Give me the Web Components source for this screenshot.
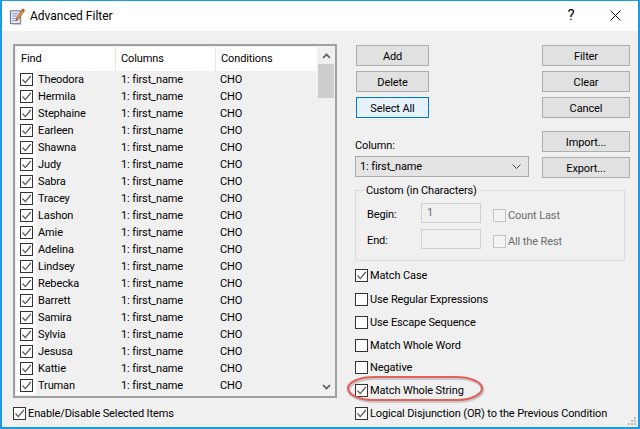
<!DOCTYPE html>
<html>
<head>
<meta charset="utf-8">
<title>Advanced Filter</title>
<style>
  html, body { margin: 0; padding: 0; background: #f0f0f0; }
  body { font: 11px Roboto, Lato, sans-serif; letter-spacing: -.12px; color: #000; }
</style>
</head>
<body>
<af-dialog>
  <af-list slot="left"></af-list>
  <af-check slot="left" checked class="enable">Enable/Disable Selected Items</af-check>

  <af-panel slot="right">
    <af-button slot="a" style="width:73px">Add</af-button>
    <af-button slot="a" style="width:73px">Delete</af-button>
    <af-button slot="a" style="width:73px" focus>Select All</af-button>
    <af-button slot="b">Filter</af-button>
    <af-button slot="b">Clear</af-button>
    <af-button slot="b">Cancel</af-button>
    <af-button slot="c">Import...</af-button>
    <af-button slot="c">Export...</af-button>
    <af-combo slot="combo" label="Column:" value="1: first_name"></af-combo>
  </af-panel>

  <af-group slot="right"></af-group>

  <af-options slot="right">
    <af-check checked>Match Case</af-check>
    <af-check style="margin-top:1px">Use Regular Expressions</af-check>
    <af-check>Use Escape Sequence</af-check>
    <af-check>Match Whole Word</af-check>
    <af-check style="margin-top:-1px">Negative</af-check>
    <af-check checked>Match Whole String</af-check>
    <af-check checked>Logical Disjunction (OR) to the Previous Condition</af-check>
  </af-options>
</af-dialog>

<script>
const CHECK_MARK = `<svg viewBox="0 0 13 13" width="13" height="13"><path d="M2.5 6.5 L5.3 9.6 L10.8 3" fill="none" stroke="#5a5a5a" stroke-width="1.3"/></svg>`;

class AfDialog extends HTMLElement {
  constructor() {
    super();
    this.attachShadow({ mode: "open" });
    this.shadowRoot.innerHTML = `
      <style>
        :host {
          display: flex;
          flex-direction: column;
          position: relative;
          box-sizing: border-box;
          width: 640px;
          height: 429px;
          overflow: hidden;
          background: #f0f0f0;
          border: solid #1a9be6;
          border-width: 1px 2px 2px 2px;
        }
        .title {
          height: 30px;
          flex: none;
          background: #fff;
          display: flex;
          align-items: center;
        }
        .title svg.app { margin: 0 4px 0 7px; flex: none; }
        .title span { flex: 1; font-size: 12px; letter-spacing: 0; }
        .help { width: 46px; text-align: center; font-size: 15px; position: relative; top: -1px; margin-right: -1px; }
        .close { width: 45px; display: flex; justify-content: center; position: relative; top: -1px; }
        .main {
          flex: 1;
          display: flex;
          gap: 18px;
          padding: 13px 0 0 11px;
        }
        .left { width: 324px; display: flex; flex-direction: column; gap: 7px; }
        .right { width: 275px; display: flex; flex-direction: column; }
        .ring { position: absolute; left: 343px; top: 371px; }
        .grip { position: absolute; right: 1px; bottom: 1px; }
      </style>
      <div class="title">
        <svg class="app" width="17" height="17" viewBox="0 0 18 18">
          <path d="M1.5 3 H12 V16.5 H1.5 Z" fill="#eef0fa" stroke="#5a5f8c"/>
          <path d="M12.5 5 V17 H3" fill="none" stroke="#9a9ab4"/>
          <path d="M3 6 H10 M3 8.5 H9 M3 11 H8 M3 13.5 H9" stroke="#7f8fc4" stroke-width="1"/>
          <path d="M14.5 1 L16.5 2.5 L10 12 L7.5 13.5 L8 10.5 Z" fill="#e8a23a" stroke="#8a4a22" stroke-width=".8"/>
          <path d="M14.5 1 L16.5 2.5 L15.4 4 L13.4 2.6 Z" fill="#c2402e"/>
        </svg>
        <span>Advanced Filter</span>
        <div class="help">?</div>
        <div class="close">
          <svg width="11" height="11" viewBox="0 0 11 11"><path d="M.5 .5 L10.5 10.5 M10.5 .5 L.5 10.5" stroke="#111" stroke-width="1"/></svg>
        </div>
      </div>
      <div class="main">
        <div class="left"><slot name="left"></slot></div>
        <div class="right"><slot name="right"></slot></div>
      </div>
      <svg class="ring" width="146" height="34" viewBox="0 0 146 34">
        <rect x="3" y="5" width="134" height="23" rx="26" ry="11.5" fill="none" stroke="#000" stroke-opacity=".16" stroke-width="3" transform="translate(1 1.5)"/>
        <rect x="3" y="5" width="134" height="23" rx="26" ry="11.5" fill="none" stroke="#e2625a" stroke-width="2.2"/>
      </svg>
      <svg class="grip" width="10" height="10" viewBox="0 0 10 10" fill="#bdbdbd">
        <rect x="7" y="1" width="2" height="2"/><rect x="4" y="4" width="2" height="2"/><rect x="7" y="4" width="2" height="2"/>
        <rect x="1" y="7" width="2" height="2"/><rect x="4" y="7" width="2" height="2"/><rect x="7" y="7" width="2" height="2"/>
      </svg>
    `;
  }
}

class AfList extends HTMLElement {
  constructor() {
    super();
    this.attachShadow({ mode: "open" });
    const names = ["Theodora","Hermila","Stephaine","Earleen","Shawna","Judy","Sabra","Tracey","Lashon","Amie","Adelina","Lindsey","Rebecka","Barrett","Samira","Sylvia","Jesusa","Kattie","Truman",""];
    const rows = names.map(n => `
      <div class="row">
        <div class="cb"><div class="box">${CHECK_MARK}</div></div>
        <div class="name">${n}</div>
        <div class="col">${n ? "1: first_name" : ""}</div>
        <div class="cond">${n ? "CHO" : ""}</div>
      </div>`).join("");
    this.shadowRoot.innerHTML = `
      <style>
        :host {
          display: flex;
          box-sizing: border-box;
          width: 324px;
          height: 354px;
          border: 1px solid #a0a0a0;
          outline: 1px solid #a0a0a0;
          outline-offset: -2px;
          padding: 2px;
          overflow: hidden;
          background: #f0f0f0;
        }
        .content { flex: 1; overflow: hidden; min-width: 0; }
        .head {
          display: grid;
          grid-template-columns: 100px 100px 1fr;
          height: 24px;
          background: #fff;
          line-height: 23px;
        }
        .head div { padding-left: 5px; border-right: 1px solid #e6e6e6; box-sizing: border-box; }
        .head div:last-child { border-right: 0; }
        .row {
          display: grid;
          grid-template-columns: 20px 85px 99px 1fr;
          height: 17px;
          line-height: 17px;
          white-space: nowrap;
        }
        .cb { background: #fff; padding-left: 4px; display: flex; align-items: center; }
        .box { width: 13px; height: 13px; box-sizing: border-box; border: 1px solid #333; background: #fff; display: flex; align-items: center; justify-content: center; flex: none; }
        .box svg { flex: none; }
        .name { padding-left: 2px; }
        .bar {
          width: 16px;
          flex: none;
          display: flex;
          flex-direction: column;
          align-items: stretch;
          margin-left: 1px;
          background: #f0f0f0;
        }
        .arrow { height: 17px; display: flex; align-items: center; justify-content: center; flex: none; }
        .thumb { height: 34px; background: #cdcdcd; flex: none; }
        .track { flex: 1; }
      </style>
      <div class="content">
        <div class="head"><div>Find</div><div>Columns</div><div>Conditions</div></div>
        ${rows}
      </div>
      <div class="bar">
        <div class="arrow"><svg width="9" height="6" viewBox="0 0 9 6"><path d="M1 5 L4.5 1.5 L8 5" fill="none" stroke="#555" stroke-width="1.6"/></svg></div>
        <div class="thumb"></div>
        <div class="track"></div>
        <div class="arrow"><svg width="9" height="6" viewBox="0 0 9 6"><path d="M1 1 L4.5 4.5 L8 1" fill="none" stroke="#555" stroke-width="1.6"/></svg></div>
      </div>
    `;
  }
}

class AfButton extends HTMLElement {
  constructor() {
    super();
    this.attachShadow({ mode: "open" });
    this.shadowRoot.innerHTML = `
      <style>
        :host {
          display: flex;
          align-items: center;
          justify-content: center;
          box-sizing: border-box;
          height: 21px;
          padding-top: 1px;
          background: #e1e1e1;
          border: 1px solid #adadad;
          white-space: nowrap;
        }
        :host([focus]) { background: #e5f1fb; border-color: #0078d7; }
      </style>
      <span><slot></slot></span>
    `;
  }
}

class AfCheck extends HTMLElement {
  constructor() {
    super();
    this.attachShadow({ mode: "open" });
    this.shadowRoot.innerHTML = `
      <style>
        :host { display: flex; align-items: center; gap: 2px; white-space: nowrap; height: 17px; }
        .box { width: 13px; height: 13px; box-sizing: border-box; border: 1px solid #333; background: #fff; display: flex; align-items: center; justify-content: center; flex: none; }
        :host([disabled]) .box { border-color: #c4c4c4; background: #f3f3f3; }
        :host([disabled]) { color: #6d6d6d; }
        svg { flex: none; }
      </style>
      <div class="box">${this.hasAttribute("checked") ? CHECK_MARK : ""}</div>
      <span><slot></slot></span>
    `;
  }
}

class AfCombo extends HTMLElement {
  constructor() {
    super();
    this.attachShadow({ mode: "open" });
    this.shadowRoot.innerHTML = `
      <style>
        :host { display: flex; flex-direction: column; gap: 2px; }
        .label { height: 17px; line-height: 17px; }
        .field {
          box-sizing: border-box; height: 21px; width: 174px;
          background: #e4e4e4; border: 1px solid #a9a9a9;
          display: flex; align-items: center; justify-content: space-between;
          padding: 0 4px; line-height: 17px;
        }
      </style>
      <div class="label">${this.getAttribute("label")}</div>
      <div class="field">
        <span>${this.getAttribute("value")}</span>
        <svg width="9" height="5" viewBox="0 0 9 5" style="margin-right:3px"><path d="M.5 .5 L4.5 4.5 L8.5 .5" fill="none" stroke="#444" stroke-width="1"/></svg>
      </div>
    `;
  }
}

class AfPanel extends HTMLElement {
  constructor() {
    super();
    this.attachShadow({ mode: "open" });
    this.shadowRoot.innerHTML = `
      <style>
        :host { display: grid; grid-template-columns: 174px 88px; justify-content: space-between; width: 275px; padding-top: 1px; }
        .stack { display: flex; flex-direction: column; gap: 5px; }
        .stack.inset { margin-left: 1px; }
        .side { display: flex; flex-direction: column; gap: 13px; }
        .col1 { display: flex; flex-direction: column; justify-content: space-between; height: 132px; }
      </style>
      <div class="col1">
        <div class="stack inset"><slot name="a"></slot></div>
        <slot name="combo"></slot>
      </div>
      <div class="side">
        <div class="stack"><slot name="b"></slot></div>
        <div class="stack"><slot name="c"></slot></div>
      </div>
    `;
  }
}

class AfGroup extends HTMLElement {
  constructor() {
    super();
    this.attachShadow({ mode: "open" });
    this.shadowRoot.innerHTML = `
      <style>
        :host {
          display: block; position: relative; box-sizing: border-box;
          width: 270px; height: 71px; margin-top: 12px;
          border: 1px solid #dcdcdc;
        }
        .legend { position: absolute; left: 8px; top: -8px; background: #f0f0f0; padding: 0 3px 0 2px; height: 16px; line-height: 16px; }
        .body {
          display: grid;
          grid-template-columns: 54px 60px auto;
          grid-auto-rows: 20px;
          row-gap: 6px;
          padding: 12px 0 0 11px;
          align-items: center;
        }
        .lbl { padding-top: 2px; }
        .input {
          box-sizing: border-box; height: 20px; width: 60px;
          border: 1px solid #d0d0d0; background: #f0f0f0; color: #6d6d6d;
          line-height: 18px; padding-left: 5px;
        }
        af-check { margin: 4px 0 0 12px; }
      </style>
      <div class="legend">Custom (in Characters)</div>
      <div class="body">
        <div class="lbl">Begin:</div><div class="input">1</div><af-check disabled>Count Last</af-check>
        <div class="lbl">End:</div><div class="input"></div><af-check disabled>All the Rest</af-check>
      </div>
    `;
  }
}

class AfOptions extends HTMLElement {
  constructor() {
    super();
    this.attachShadow({ mode: "open" });
    this.shadowRoot.innerHTML = `
      <style>
        :host { display: flex; flex-direction: column; gap: 6px; margin-top: 6px; }
      </style>
      <slot></slot>
    `;
  }
}

customElements.define("af-dialog", AfDialog);
customElements.define("af-list", AfList);
customElements.define("af-button", AfButton);
customElements.define("af-check", AfCheck);
customElements.define("af-combo", AfCombo);
customElements.define("af-panel", AfPanel);
customElements.define("af-group", AfGroup);
customElements.define("af-options", AfOptions);
</script>
</body>
</html>
